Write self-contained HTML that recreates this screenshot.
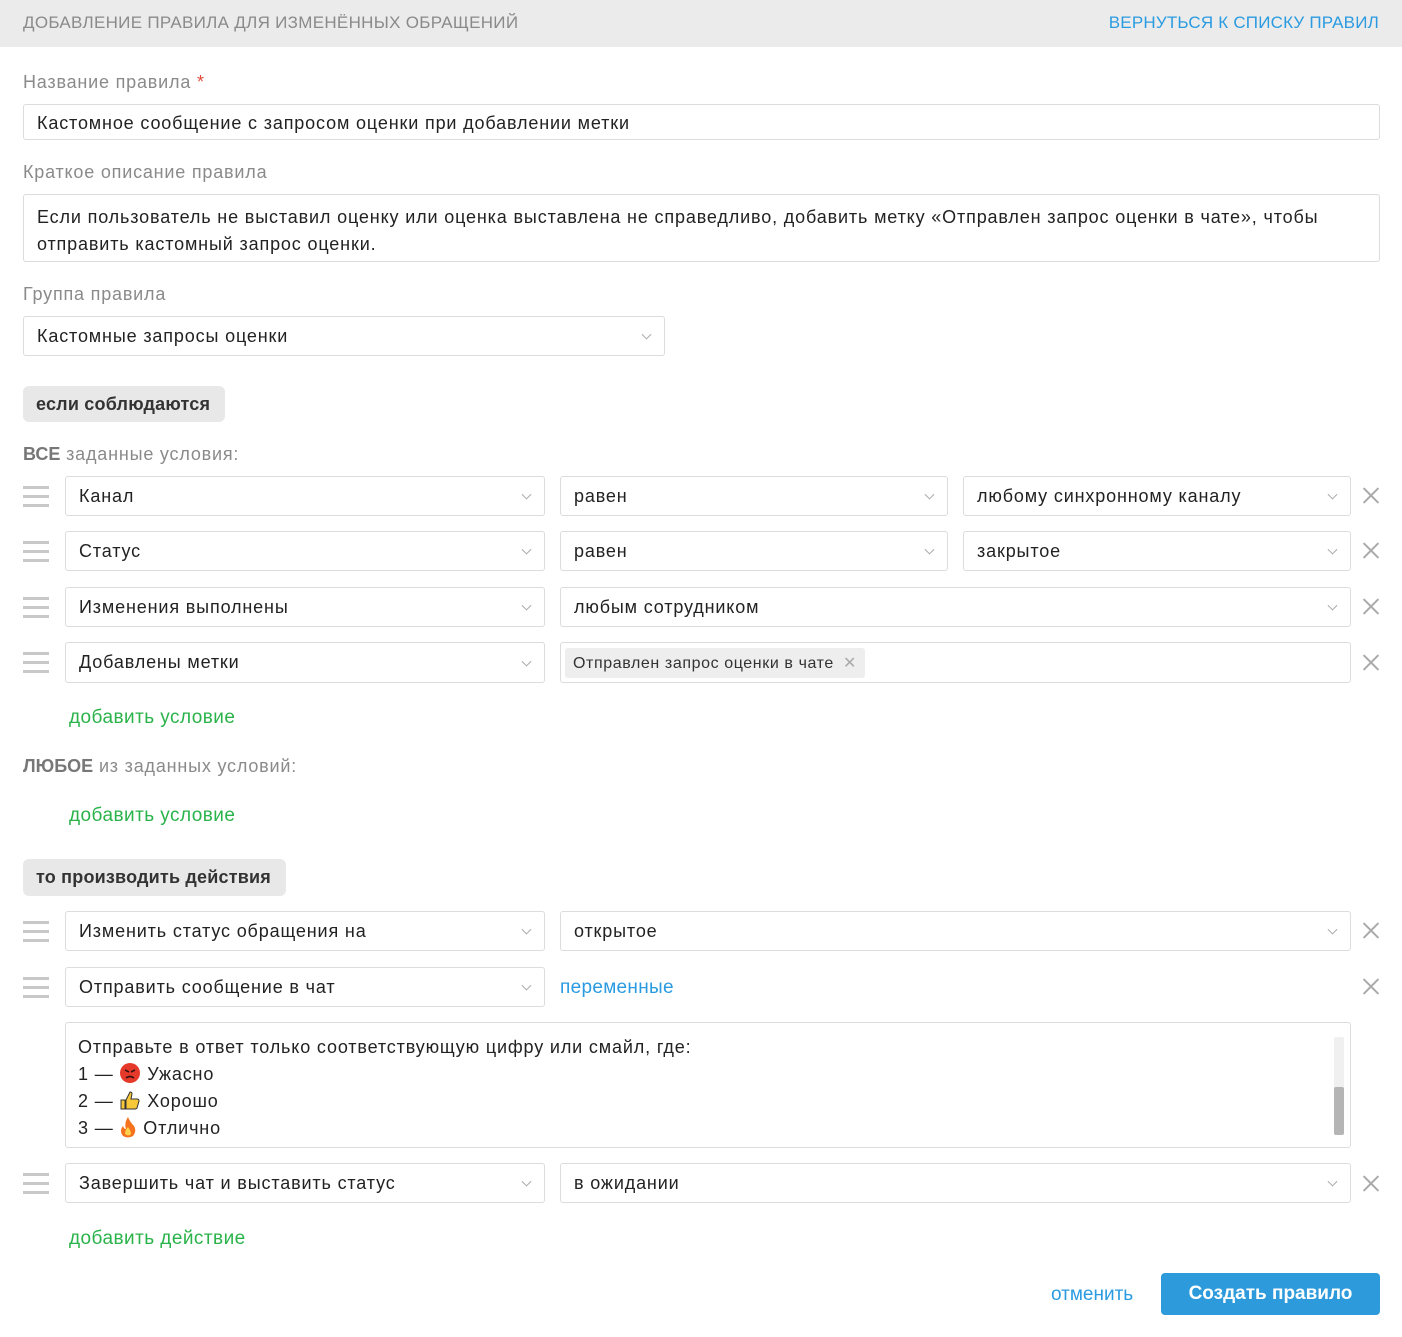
<!DOCTYPE html>
<html><head><meta charset="utf-8"><style>
*{box-sizing:border-box;margin:0;padding:0}
body{width:1402px;height:1337px;background:#fff;font-family:"Liberation Sans",sans-serif;position:relative;overflow:hidden;color:#222}
.a{position:absolute}
.hdr{left:0;top:0;width:1402px;height:47px;background:#ebebeb}
.t{position:absolute;white-space:nowrap;line-height:20px}
.lbl{font-size:18px;color:#8a8a8a;letter-spacing:0.8px}
.box{position:absolute;border:1px solid #dcdcdc;border-radius:3px;background:#fff;font-size:18px;letter-spacing:0.85px;color:#222;padding-left:13px;display:flex;align-items:center;white-space:nowrap}
.chev{position:absolute;right:14px;top:50%;width:7px;height:7px;border-right:1px solid #aaa;border-bottom:1px solid #aaa;transform:translateY(-70%) rotate(45deg)}
.ham{position:absolute;left:23px;width:26px;height:20px}
.ham i{position:absolute;left:0;width:26px;height:3px;background:#c8c8c8}
.x{position:absolute;left:1362px;width:17px;height:17px}
.x:before,.x:after{content:"";position:absolute;left:8px;top:-2px;width:2px;height:21px;background:#aaa;transform:rotate(45deg)}
.x:after{transform:rotate(-45deg)}
.pill{position:absolute;background:#e8e8e8;border-radius:6px;font-weight:bold;font-size:18px;letter-spacing:0.2px;color:#333;display:flex;align-items:center;padding-left:13px}
.grn{font-size:19px;color:#2ab34a;letter-spacing:0.45px}
</style></head><body>
<div class="a hdr"></div>
<div class="t" style="left:23px;top:13px;font-size:17px;color:#8a8a8a;letter-spacing:0.3px">ДОБАВЛЕНИЕ ПРАВИЛА ДЛЯ ИЗМЕНЁННЫХ ОБРАЩЕНИЙ</div>
<div class="t" style="right:23px;top:13px;font-size:17px;color:#2a9be0;letter-spacing:0.2px">ВЕРНУТЬСЯ К СПИСКУ ПРАВИЛ</div>

<div class="t lbl" style="left:23px;top:72px">Название правила <span style="color:#e04a3a">*</span></div>
<div class="box" style="left:23px;top:104px;width:1357px;height:36px;padding-top:3px">Кастомное сообщение с запросом оценки при добавлении метки</div>
<div class="t lbl" style="left:23px;top:162px">Краткое описание правила</div>
<div class="box" style="left:23px;top:194px;width:1357px;height:68px;align-items:flex-start;padding-top:9px;line-height:27px;white-space:normal;padding-right:40px">Если пользователь не выставил оценку или оценка выставлена не справедливо, добавить метку «Отправлен запрос оценки в чате», чтобы отправить кастомный запрос оценки.</div>
<div class="t lbl" style="left:23px;top:284px">Группа правила</div>
<div class="box" style="left:23px;top:316px;width:642px;height:40px">Кастомные запросы оценки<i class="chev"></i></div>

<div class="pill" style="left:23px;top:386px;width:202px;height:36px">если соблюдаются</div>
<div class="t lbl" style="left:23px;top:444px"><b style="color:#777;letter-spacing:0">ВСЕ</b> заданные условия:</div>

<div class="ham" style="top:486px"><i style="top:0"></i><i style="top:9px"></i><i style="top:18px"></i></div>
<div class="box" style="left:65px;top:476px;width:480px;height:40px">Канал<i class="chev"></i></div>
<div class="box" style="left:560px;top:476px;width:388px;height:40px">равен<i class="chev"></i></div>
<div class="box" style="left:963px;top:476px;width:388px;height:40px">любому синхронному каналу<i class="chev"></i></div>
<div class="x" style="top:487px"></div>

<div class="ham" style="top:541px"><i style="top:0"></i><i style="top:9px"></i><i style="top:18px"></i></div>
<div class="box" style="left:65px;top:531px;width:480px;height:40px">Статус<i class="chev"></i></div>
<div class="box" style="left:560px;top:531px;width:388px;height:40px">равен<i class="chev"></i></div>
<div class="box" style="left:963px;top:531px;width:388px;height:40px">закрытое<i class="chev"></i></div>
<div class="x" style="top:542px"></div>

<div class="ham" style="top:597px"><i style="top:0"></i><i style="top:9px"></i><i style="top:18px"></i></div>
<div class="box" style="left:65px;top:587px;width:480px;height:40px">Изменения выполнены<i class="chev"></i></div>
<div class="box" style="left:560px;top:587px;width:791px;height:40px">любым сотрудником<i class="chev"></i></div>
<div class="x" style="top:598px"></div>

<div class="ham" style="top:652px"><i style="top:0"></i><i style="top:9px"></i><i style="top:18px"></i></div>
<div class="box" style="left:65px;top:642px;width:480px;height:41px">Добавлены метки<i class="chev"></i></div>
<div class="box" style="left:560px;top:642px;width:791px;height:41px;padding-left:4px"><span style="background:#eee;border-radius:3px;font-size:16px;letter-spacing:0.6px;padding:5px 8px;color:#333">Отправлен запрос оценки в чате <span style="color:#aaa;margin-left:4px">✕</span></span></div>
<div class="x" style="top:654px"></div>

<div class="t grn" style="left:69px;top:708px">добавить условие</div>
<div class="t lbl" style="left:23px;top:756px"><b style="color:#777;letter-spacing:0">ЛЮБОЕ</b> из заданных условий:</div>
<div class="t grn" style="left:69px;top:806px">добавить условие</div>

<div class="pill" style="left:23px;top:859px;width:263px;height:37px">то производить действия</div>

<div class="ham" style="top:921px"><i style="top:0"></i><i style="top:9px"></i><i style="top:18px"></i></div>
<div class="box" style="left:65px;top:911px;width:480px;height:40px">Изменить статус обращения на<i class="chev"></i></div>
<div class="box" style="left:560px;top:911px;width:791px;height:40px">открытое<i class="chev"></i></div>
<div class="x" style="top:922px"></div>

<div class="ham" style="top:977px"><i style="top:0"></i><i style="top:9px"></i><i style="top:18px"></i></div>
<div class="box" style="left:65px;top:967px;width:480px;height:40px">Отправить сообщение в чат<i class="chev"></i></div>
<div class="t" style="left:560px;top:978px;font-size:19px;color:#2a9be0;letter-spacing:0.3px">переменные</div>
<div class="x" style="top:978px"></div>

<div class="box" style="left:65px;top:1022px;width:1286px;height:126px;align-items:flex-start;padding-top:11px;padding-left:12px;line-height:27px;white-space:normal;display:block">
Отправьте в ответ только соответствующую цифру или смайл, где:<br>
1 — <svg width="22" height="22" viewBox="0 0 22 22" style="vertical-align:-4px"><circle cx="11" cy="11" r="10" fill="#e53a2a"/><path d="M6 8l4 2M16 8l-4 2M7 16q4-3 8 0" stroke="#3a1010" stroke-width="1.6" fill="none"/></svg> Ужасно<br>
2 — <svg width="22" height="22" viewBox="0 0 22 22" style="vertical-align:-4px"><path d="M2 11h4v9H2zM7 11l4-8q2 0 2 2l-1 5h6q2 0 2 2l-2 7q-1 1-2 1H7z" fill="#f7c83a" stroke="#333" stroke-width="1"/></svg> Хорошо<br>
3 — <svg width="18" height="22" viewBox="0 0 18 22" style="vertical-align:-4px"><path d="M9 1q2 5 6 9q3 5-1 10q-5 3-10 0q-4-5 0-10q1 3 3 3q-2-6 2-12z" fill="#f5731f"/><path d="M9 11q3 4 3 7q-2 3-6 0q0-4 3-7z" fill="#fcd34a"/></svg> Отлично
<div style="position:absolute;right:6px;top:14px;width:10px;height:98px;background:#f0f0f0;border-radius:2px"><div style="position:absolute;left:0;top:50px;width:10px;height:48px;background:#b5b5b5;border-radius:2px"></div></div>
</div>

<div class="ham" style="top:1173px"><i style="top:0"></i><i style="top:9px"></i><i style="top:18px"></i></div>
<div class="box" style="left:65px;top:1163px;width:480px;height:40px">Завершить чат и выставить статус<i class="chev"></i></div>
<div class="box" style="left:560px;top:1163px;width:791px;height:40px">в ожидании<i class="chev"></i></div>
<div class="x" style="top:1175px"></div>

<div class="t grn" style="left:69px;top:1229px">добавить действие</div>

<div class="t" style="left:1051px;top:1285px;font-size:19px;color:#2a9be0">отменить</div>
<div class="a" style="left:1161px;top:1273px;width:219px;height:42px;background:#2d9bdb;border-radius:4px;color:#fff;font-weight:bold;font-size:19px;display:flex;align-items:center;justify-content:center">Создать правило</div>
</body></html>
